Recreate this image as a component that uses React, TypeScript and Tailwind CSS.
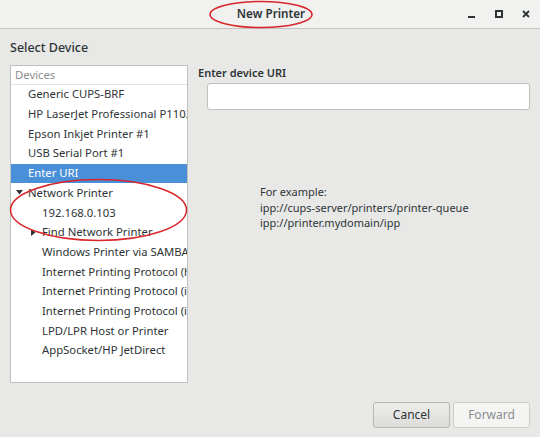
import React from "react";

const font = { fontFamily: '"Noto Sans", "Open Sans", sans-serif' };

function Item({ label, level = 0, selected = false, arrow }: { label: string; level?: number; selected?: boolean; arrow?: "down" | "right" }) {
  return (
    <div
      className={`relative h-[19.7px] flex items-center whitespace-nowrap ${selected ? "bg-[#4a90d9] text-white" : "text-[#2e3436]"}`}
      style={{ paddingLeft: level === 0 ? 17 : 31 }}
    >
      {arrow === "down" && (
        <svg className="absolute left-[5px] top-[7px]" width="7" height="5" viewBox="0 0 7 5">
          <path d="M0 0 L7 0 L3.5 4.5 Z" fill="#2e3436" />
        </svg>
      )}
      {arrow === "right" && (
        <svg className="absolute left-[20px] top-[6px]" width="5" height="7" viewBox="0 0 5 7">
          <path d="M0 0 L4.5 3.5 L0 7 Z" fill="#2e3436" />
        </svg>
      )}
      {label}
    </div>
  );
}

export default function App() {
  return (
    <div className="relative w-[540px] h-[437px] bg-[#e8e8e7] flex flex-col overflow-hidden text-[11.3px] text-[#2e3436]" style={font}>
      {/* title bar */}
      <div className="relative h-[29px] shrink-0 bg-[#f1f1f0] border-b border-[#c4c4c2] flex items-center justify-center">
        <span className="font-semibold text-[11.7px] text-[#2e3436] ml-[2px]">New Printer</span>
        <div className="absolute right-[10px] top-0 h-full flex items-center gap-[19px]">
          <svg width="8" height="8" viewBox="0 0 8 8"><rect x="0" y="6" width="7" height="2" fill="#2e3436" /></svg>
          <svg width="8" height="8" viewBox="0 0 8 8"><rect x="1" y="1" width="6" height="6" fill="none" stroke="#2e3436" strokeWidth="2" /></svg>
          <svg width="8" height="8" viewBox="0 0 8 8"><path d="M1 1 L7 7 M7 1 L1 7" stroke="#2e3436" strokeWidth="1.8" /></svg>
        </div>
      </div>

      <div className="flex-1 flex flex-col px-[10px]">
        <div className="pt-[10px] h-[36px] text-[12.5px] font-medium text-[#2e3436]">Select Device</div>
        <div className="flex">
          {/* device list */}
          <div className="w-[178px] h-[318px] bg-white border border-[#c0c0bd] overflow-hidden shrink-0">
            <div className="h-[19px] flex items-center pl-[4px] text-[#8b8e8f] border-b border-[#e4e4e2]">Devices</div>
            <Item label="Generic CUPS-BRF" />
            <Item label="HP LaserJet Professional P1102" />
            <Item label="Epson Inkjet Printer #1" />
            <Item label="USB Serial Port #1" />
            <Item label="Enter URI" selected />
            <Item label="Network Printer" arrow="down" />
            <Item label="192.168.0.103" level={1} />
            <Item label="Find Network Printer" level={1} arrow="right" />
            <Item label="Windows Printer via SAMBA" level={1} />
            <Item label="Internet Printing Protocol (https)" level={1} />
            <Item label="Internet Printing Protocol (ipps)" level={1} />
            <Item label="Internet Printing Protocol (ipp)" level={1} />
            <Item label="LPD/LPR Host or Printer" level={1} />
            <Item label="AppSocket/HP JetDirect" level={1} />
          </div>

          {/* right panel */}
          <div className="flex-1 flex flex-col pl-[10px]">
            <div className="font-semibold text-[11px] h-[18px] leading-[18px] mt-[-1px]">Enter device URI</div>
            <div className="ml-[9px] mt-[1px] h-[27px] bg-white border border-[#c0c0bd] rounded-[3px]" />
            <div className="mt-[74px] ml-[62px] text-[11px] leading-[15.5px] text-[#2e3436]">
              <div>For example:</div>
              <div>ipp://cups-server/printers/printer-queue</div>
              <div>ipp://printer.mydomain/ipp</div>
            </div>
          </div>
        </div>

        <div className="flex justify-end gap-[3px] mt-[19px]">
          <button className="w-[77px] h-[26px] rounded-[3px] border border-[#b6b6b3] bg-gradient-to-b from-[#ededec] to-[#dcdcda] text-[#2e3436] text-[12px]">Cancel</button>
          <button className="w-[77px] h-[26px] rounded-[3px] border border-[#cdcdcb] bg-[#f4f4f3] text-[#8b8e8f] text-[12px]">Forward</button>
        </div>
      </div>

      {/* annotations */}
      <svg className="absolute left-0 top-0 pointer-events-none" width="540" height="437">
        <ellipse cx="261" cy="14.5" rx="51" ry="13" fill="none" stroke="#d9262b" strokeWidth="1.5" />
        <ellipse cx="98.5" cy="210" rx="88" ry="30.5" fill="none" stroke="#d9262b" strokeWidth="1.5" />
      </svg>
    </div>
  );
}
